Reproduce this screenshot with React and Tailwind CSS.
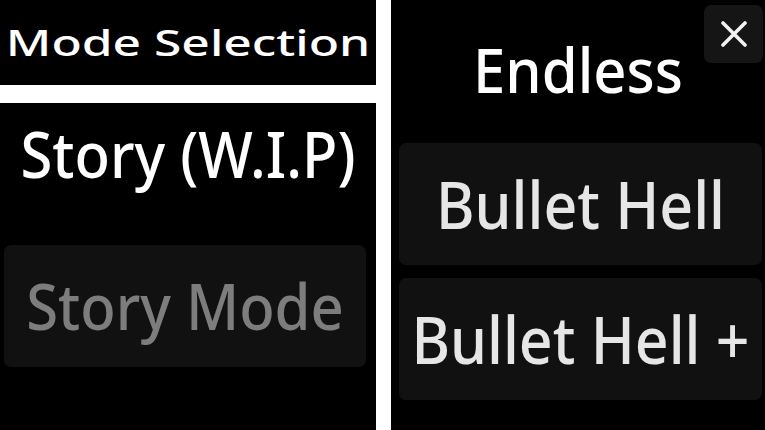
import React from "react";

const font = { fontFamily: '"Noto Sans", "Open Sans", sans-serif' };

function CloseIcon() {
  return (
    <svg width="28" height="26" viewBox="0 0 28 26" fill="none">
      <path d="M3 2 L25 24 M25 2 L3 24" stroke="#f2f2f2" strokeWidth="3.6" strokeLinecap="round" />
    </svg>
  );
}

function ModeButton({ label, className, textClass }) {
  return (
    <button
      className={`flex h-[122px] items-center justify-center rounded-[7px] bg-[#111111] ${className}`}
    >
      <span className={`inline-block scale-y-[1.1] font-medium leading-none ${textClass}`}>{label}</span>
    </button>
  );
}

export default function App() {
  return (
    <div className="flex h-[430px] w-[765px] overflow-hidden bg-black" style={font}>
      {/* left column: title and story modes */}
      <div className="flex w-[376px] flex-col">
        <div className="flex h-[85px] items-center justify-center">
          <span className="inline-block scale-x-[1.38] text-[36px] font-medium leading-none text-white">
            Mode Selection
          </span>
        </div>
        <div className="h-[18px] bg-white" />
        <div className="flex h-[102px] items-center justify-center">
          <span className="inline-block scale-y-[1.1] text-[58px] font-medium leading-none text-white">
            Story (W.I.P)
          </span>
        </div>
        <ModeButton
          label="Story Mode"
          className="ml-[4px] mt-[40px] w-[362px]"
          textClass="text-[58px] text-[#7d7d7d]"
        />
      </div>

      {/* divider */}
      <div className="w-[15px] bg-white" />

      {/* right column: endless modes */}
      <div className="relative flex flex-1 flex-col">
        <div className="flex h-[140px] items-center justify-center">
          <span className="inline-block scale-y-[1.05] text-[58px] font-medium leading-none text-white">
            Endless
          </span>
        </div>
        <button className="absolute right-[2px] top-[5px] flex h-[58px] w-[59px] items-center justify-center rounded-[7px] bg-[#151515]">
          <CloseIcon />
        </button>
        <div className="ml-[8px] mr-[3px] mt-[3px] flex flex-col gap-[13px]">
          <ModeButton label="Bullet Hell" className="w-full" textClass="text-[59px] text-[#e6e6e6]" />
          <ModeButton label="Bullet Hell +" className="w-full" textClass="text-[59px] text-[#e6e6e6]" />
        </div>
      </div>
    </div>
  );
}
